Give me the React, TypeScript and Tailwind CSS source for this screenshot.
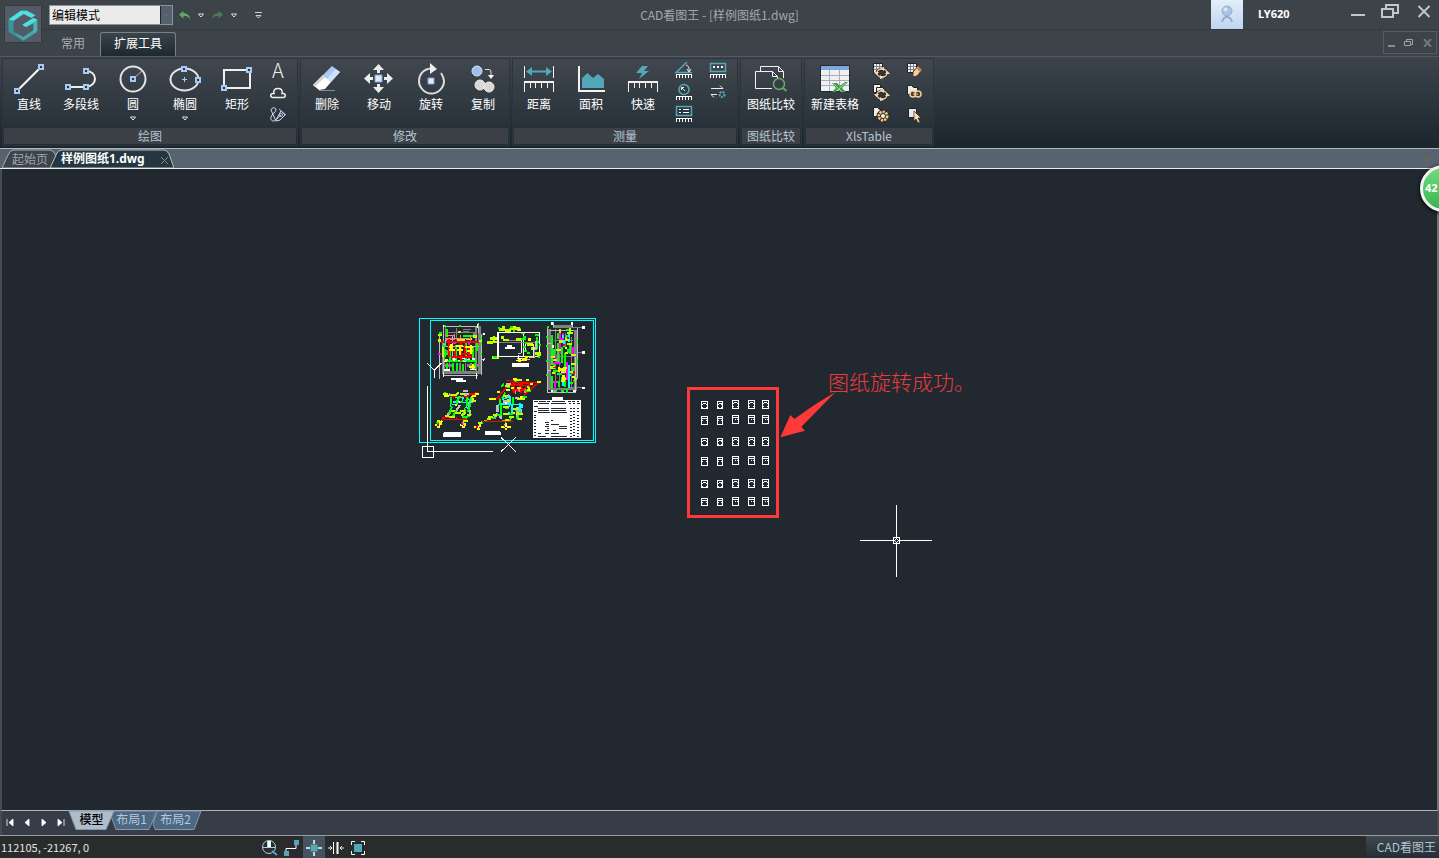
import { useState } from "react";
import type { ReactNode } from "react";

type IconProps = { children: ReactNode };

const TEAL = "#52a8b8";

function Icon({ children }: IconProps) {
  return (
    <svg width="32" height="32" viewBox="0 0 32 32" fill="none" className="overflow-visible">
      {children}
    </svg>
  );
}

function SmallIcon({ children }: IconProps) {
  return (
    <svg width="18" height="18" viewBox="0 0 18 18" fill="none" className="overflow-visible">
      {children}
    </svg>
  );
}

// Little blue grip with a dark middle
function Grip({ x, y }: { x: number; y: number }) {
  return (
    <g shapeRendering="crispEdges">
      <rect x={x - 3} y={y - 3} width="6" height="6" fill="#a9c9f5" />
      <rect x={x - 1} y={y - 1} width="2" height="2" fill="#1d3350" />
    </g>
  );
}

function Ruler() {
  return (
    <g stroke="#f2f2f2" shapeRendering="crispEdges">
      <path d="M1 18h30" strokeWidth="2" />
      <path d="M1.5 18v10M30.5 18v10M7.5 18v6M12.5 18v6M18.5 18v6M24.5 18v6" />
    </g>
  );
}

function SmallRuler() {
  return (
    <path
      d="M1 13.500h16M1.500 13v4M4.500 13v4M7.500 13v4M10.500 13v4M13.500 13v4M16.500 13v4"
      stroke="#fff"
      shapeRendering="crispEdges"
    />
  );
}

function Chevron() {
  return (
    <svg width="6" height="5" viewBox="0 0 6 5" fill="none">
      <path d="M0.500 1h5L3 4z" fill="#222" stroke="#e8e8e8" />
    </svg>
  );
}

const draw = [
  {
    label: "直线",
    icon: (
      <Icon>
        <path d="M4 27L28 3" stroke="#fff" strokeWidth="2" />
        <Grip x={28} y={3} />
        <Grip x={4} y={27} />
      </Icon>
    ),
  },
  {
    label: "多段线",
    icon: (
      <Icon>
        <path d="M3 23h18c12-1 12-16 0-16" stroke="#eee" strokeWidth="2" />
        <Grip x={21} y={7} />
        <Grip x={3} y={23} />
        <Grip x={21} y={23} />
      </Icon>
    ),
  },
  {
    label: "圆",
    menu: true,
    icon: (
      <Icon>
        <circle cx="16" cy="15" r="12.500" stroke="#e4e4e4" strokeWidth="2" />
        <path d="M17 14l8-7" stroke="#b4b8bd" />
        <Grip x={16} y={15} />
      </Icon>
    ),
  },
  {
    label: "椭圆",
    menu: true,
    icon: (
      <Icon>
        <ellipse cx="15.500" cy="15.500" rx="14" ry="11" stroke="#e4e4e4" strokeWidth="2" />
        <path d="M13 15.500h5M15.500 13v5" stroke="#a9c9f5" shapeRendering="crispEdges" />
        <Grip x={15} y={5} />
        <Grip x={29} y={16} />
      </Icon>
    ),
  },
  {
    label: "矩形",
    icon: (
      <Icon>
        <path d="M3 6h26v18H3z" stroke="#f0f0f0" strokeWidth="2" />
        <Grip x={28} y={6} />
        <Grip x={3} y={24} />
      </Icon>
    ),
  },
];

const modify = [
  {
    label: "删除",
    icon: (
      <Icon>
        <path d="M8 26.500h16" stroke="#888b90" />
        <path d="M21 2l8 6-9 10-8-7z" fill="#a9c9f5" />
        <path d="M24.500 5L29 8l-9 10-4-3z" fill="#cfe1fa" />
        <path d="M12 11l8 7-6 7-6 1-6-5z" fill="#fff" />
        <path d="M12 11l2 2L4 23l-2-2z" fill="#d4d4d6" />
      </Icon>
    ),
  },
  {
    label: "移动",
    icon: (
      <Icon>
        <g fill="#ececec">
          <path d="M15.500 0l5.500 6h-4v3h-3V6h-4zM15.500 29l5.500-6h-4v-3h-3v3h-4z" />
          <path d="M1 14.500L7 9v4h3v3H7v4zM30 14.500L24 9v4h-3v3h3v4z" />
        </g>
        <path d="M12 11h7v7h-7z" fill="#dfe9f8" stroke="#7fa3d6" />
      </Icon>
    ),
  },
  {
    label: "旋转",
    icon: (
      <Icon>
        <path d="M16 4.500C8 5 4 11 4 17c0 7 6 12.500 12.500 12.500S29 24 29 17c0-3-1-5-3-8" stroke="#dcdcdc" strokeWidth="2" />
        <path d="M15-1l7 6-7 5z" fill="#eee" />
        <path d="M13 14h6v6h-6z" fill="#dfe9f8" stroke="#7fa3d6" />
      </Icon>
    ),
  },
  {
    label: "复制",
    icon: (
      <Icon>
        <circle cx="10" cy="7" r="5" fill="#9fc0ee" stroke="#d3e2f7" />
        <circle cx="13" cy="21" r="5" fill="#d8d8d8" stroke="#eee" />
        <circle cx="22" cy="23" r="5" fill="#d8d8d8" stroke="#eee" />
        <path d="M18 5.500h4q2 0 2 2.500v4" stroke="#ddd" />
        <path d="M21 11h6l-3 4z" fill="#fff" />
      </Icon>
    ),
  },
];

const measure = [
  {
    label: "距离",
    icon: (
      <Icon>
        <path d="M1.500 2v12M30.500 2v12" stroke="#f2f2f2" shapeRendering="crispEdges" />
        <path d="M6 7.500h20" stroke={TEAL} strokeWidth="2" />
        <path d="M3 7.500L9 3v9zM29 7.500L23 3v9z" fill={TEAL} />
        <Ruler />
      </Icon>
    ),
  },
  {
    label: "面积",
    icon: (
      <Icon>
        <path d="M3.500 2v25M3 26.500h27" stroke="#f2f2f2" strokeWidth="2" shapeRendering="crispEdges" />
        <path d="M7 24V14l5.500-5 5.500 5 5-4 6 5v9z" fill={TEAL} />
      </Icon>
    ),
  },
  {
    label: "快速",
    icon: (
      <Icon>
        <path d="M15 2h6l-4 5h5L12 15l3-6h-6z" fill={TEAL} />
        <Ruler />
      </Icon>
    ),
  },
];

const compare = [
  {
    label: "图纸比较",
    icon: (
      <Icon>
        <path d="M5.500 7V2.500h18l5 5V14M23.500 2.500v5h5" stroke="#f2f2f2" />
        <path d="M17 24.500H.500v-17h17l5 5V14M17.500 7.500v5h5" stroke="#f2f2f2" />
        <circle cx="24" cy="20" r="5.500" stroke="#67a866" strokeWidth="1.500" />
        <path d="M28 24l3.500 3" stroke="#67a866" strokeWidth="2" />
      </Icon>
    ),
  },
];

const xls = [
  {
    label: "新建表格",
    icon: (
      <Icon>
        <path d="M1.500 1.500h29v26h-29z" fill="#eef0f3" stroke="#26292d" />
        <path d="M2 2h28v4H2z" fill="#7fa8df" />
        <path d="M2 11.500h28M2 16.500h28M2 21.500h28M10.500 6v21M20.500 6v21" stroke="#a9adb3" />
        <path d="M13 19h5l3 3 5-4h3l-6 6 4 4h-5l-3-2-3 2h-3l4-4z" fill="#3f9c43" />
        <path d="M14 19l9 9M27 19l-10 8" stroke="#a5d89f" />
      </Icon>
    ),
  },
];

const drawTools = [
  { name: "文字", icon: <span className="text-[20px] leading-[22px] font-light text-[#eee]">A</span> },
  {
    name: "云线",
    icon: (
      <SmallIcon>
        <path
          d="M4 14.500h10c3 0 3-4 0-4h-1C14 7 12 5.500 9 5.500S4 7 5 10.500H4c-3 0-3 4 0 4z"
          stroke="#eee"
          strokeWidth="1.500"
        />
      </SmallIcon>
    ),
  },
  {
    name: "样条",
    icon: (
      <SmallIcon>
        <path d="M2 5c1-3 5-3 5 0 0 2-4 4-5 7-1 4 3 5 5 3l5-9 4 4-5 5-4 1z" stroke="#e0e0e0" />
        <path d="M10 4l7 6M8 14l4-4" stroke="#9fc0ee" />
        <circle cx="12" cy="10" r="1.500" stroke="#9fc0ee" />
      </SmallIcon>
    ),
  },
];

const measureTools = [
  {
    name: "角度",
    icon: (
      <SmallIcon>
        <path d="M12 1L1 11.500h16" stroke={TEAL} strokeWidth="1.500" />
        <path d="M11 4c3 1 3 3 3 6M12 8l2 3 2-3" stroke="#eee" />
        <SmallRuler />
      </SmallIcon>
    ),
  },
  {
    name: "半径",
    icon: (
      <SmallIcon>
        <circle cx="9" cy="6.500" r="5" stroke={TEAL} strokeWidth="1.500" />
        <path d="M10 8L6.500 4.500M6.500 7V4.500H9" stroke="#eee" />
        <SmallRuler />
      </SmallIcon>
    ),
  },
  {
    name: "列表",
    icon: (
      <SmallIcon>
        <path d="M1.500 1.500h15v9h-15z" stroke={TEAL} strokeWidth="1.500" />
        <path d="M4 4.500h2M8 4.500h6M4 7.500h2M8 7.500h6" stroke="#fff" shapeRendering="crispEdges" />
        <SmallRuler />
      </SmallIcon>
    ),
  },
];

const measureTools2 = [
  {
    name: "坐标",
    icon: (
      <SmallIcon>
        <path d="M1.500 2.500h15v8h-15z" stroke={TEAL} strokeWidth="1.500" />
        <path d="M4 6h2M8 6h2M12 6h2" stroke="#fff" strokeWidth="2" shapeRendering="crispEdges" />
        <SmallRuler />
      </SmallIcon>
    ),
  },
  {
    name: "设置",
    icon: (
      <SmallIcon>
        <path d="M2 5.500h12l-3-3M8 11.500H2l3 3" stroke="#eee" />
        <circle cx="13" cy="11.500" r="2.500" stroke={TEAL} strokeWidth="2" strokeDasharray="2 1" />
      </SmallIcon>
    ),
  },
];

function Grid() {
  return (
    <>
      <path d="M2.500 2.500h9v9h-9z" fill="#eceff3" stroke="#222" />
      <path d="M5.500 3v8M8.500 3v8M3 5.500h8M3 8.500h8" stroke="#7d838a" />
    </>
  );
}

function Orbit() {
  return (
    <>
      <ellipse cx="11" cy="12" rx="5" ry="4" fill="#30363c" stroke="#26221c" strokeWidth="3" />
      <ellipse cx="11" cy="12" rx="5" ry="4" stroke="#f3cf9c" strokeWidth="1.500" />
      <path d="M9 7l4-1v4zM13 17l-4 1v-4zM3 11h5l-2.500 3zM19 13h-5l2.500-3z" fill="#f7dcb4" />
    </>
  );
}

const xlsTools = [
  { name: "更新表格", icon: <SmallIcon><Grid /><Orbit /></SmallIcon> },
  {
    name: "更新全部",
    icon: (
      <SmallIcon>
        <path d="M2.500 1.500h7v8h-7z" fill="#eee" stroke="#222" />
        <path d="M5.500 4.500h7v8h-7z" fill="#eee" stroke="#222" />
        <Orbit />
      </SmallIcon>
    ),
  },
  {
    name: "表格设置",
    icon: (
      <SmallIcon>
        <path d="M2.500 2.500h4l2 2h4v7h-10z" fill="#eee" stroke="#222" />
        <circle cx="12" cy="11" r="4" stroke="#3a2c18" strokeWidth="5" />
        <circle cx="12" cy="11" r="4" stroke="#f3cf9c" strokeWidth="3" strokeDasharray="2 1" />
        <circle cx="12" cy="11" r="2.500" fill="#f2f2f2" stroke="#3a2c18" />
      </SmallIcon>
    ),
  },
];

const xlsTools2 = [
  {
    name: "编辑表格",
    icon: (
      <SmallIcon>
        <Grid />
        <path d="M8 11l5-6 4 4-5 6-4 1z" fill="#f3cf9c" stroke="#4a3526" />
        <path d="M13 5l4 4-2 2-4-4z" fill="#cf7f52" />
      </SmallIcon>
    ),
  },
  {
    name: "链接",
    icon: (
      <SmallIcon>
        <path d="M2.500 2.500h4l2 2h4v7h-10z" fill="#eee" stroke="#222" />
        <circle cx="8" cy="11" r="3" fill="#4a3b2a" stroke="#f3cf9c" strokeWidth="1.500" />
        <circle cx="13" cy="11" r="3" fill="#4a3b2a" stroke="#f3cf9c" strokeWidth="1.500" />
        <path d="M8 11h5" stroke="#f3cf9c" />
      </SmallIcon>
    ),
  },
  {
    name: "选择",
    icon: (
      <SmallIcon>
        <path d="M3.500 3.500h8v9h-8z" fill="#e8e8ea" stroke="#222" />
        <path d="M9 6l7 7h-3l2 4-2 1-2-4-2 2z" fill="#f7dcb4" stroke="#3a2c18" strokeWidth=".700" />
      </SmallIcon>
    ),
  },
];

type Tool = { label: string; icon: ReactNode; menu?: boolean };
type MiniTool = { name: string; icon: ReactNode };

function ToolButton({ label, icon, menu }: Tool) {
  return (
    <button
      className={`flex flex-col items-center pt-[5px] text-xs leading-4 text-white ${
        label.length > 3 ? "px-1.5" : "w-[52px]"
      }`}
    >
      {icon}
      <span>{label}</span>
      {menu && <span className="mt-1"><Chevron /></span>}
    </button>
  );
}

function ToolColumn({ tools }: { tools: MiniTool[] }) {
  return (
    <div className="flex w-[30px] flex-col">
      {tools.map((t) => (
        <button key={t.name} aria-label={t.name} className="flex h-[22px] items-center justify-center">
          {t.icon}
        </button>
      ))}
    </div>
  );
}

function Group({ title, tools, children }: { title: string; tools: Tool[]; children?: ReactNode }) {
  return (
    <section className="flex flex-col bg-linear-to-b from-[#41474e] to-[#212c34] pb-px shadow-[0_0_0_1px_#2c353d]">
      <div className="flex h-[69px]">
        {tools.map((t) => (
          <ToolButton key={t.label} {...t} />
        ))}
        {children}
      </div>
      <h2 className="mx-px bg-[#3b4047] text-center text-xs leading-4 text-[#b4c6d4]">{title}</h2>
    </section>
  );
}

function Logo() {
  return (
    <button aria-label="菜单" className="absolute top-[5px] left-1 border border-[#333a43] bg-[#525b66] p-px">
      <svg width="34" height="34" viewBox="0 0 102 102">
        <path d="M8 38L44 11h18l26 14-12 8-22-11-32 21v36l-14-8z" fill="#43a9ad" />
        <path d="M44 11h18l26 14-12 7-24-12-30 21-14-4z" fill="#50e0e0" />
        <path d="M8 38l14 5v32l29 16v10L9 76z" fill="#3a9499" />
        <path d="M24 75l28 15 34-23 7 8-41 26z" fill="#43a7ab" />
        <path d="M49 53l33-20 12 5v34l-12 6V50L60 61z" fill="#45b4b8" />
        <path d="M49 53l33-20 12 5-34 22z" fill="#55dddd" />
      </svg>
    </button>
  );
}

function Undo() {
  return (
    <svg width="11" height="9" viewBox="0 0 10 8" fill="currentColor">
      <path d="M0 3l4-3v2c4 0 6 2 6 6-1-3-3-3.500-6-3.500V7z" />
    </svg>
  );
}

function Header({ mode, setMode }: { mode: string; setMode: (m: string) => void }) {
  return (
    <header className="relative bg-[#3c4349]">
      <Logo />
      <div className="flex h-[29px] items-start">
        <div className="flex-1">
          <div className="flex items-center pt-[5px] pl-[49px]">
            <div className="relative flex h-5 w-[124px] border border-[#8d9298] bg-[#ebebeb]">
              <select
                aria-label="模式"
                value={mode}
                onChange={(e) => setMode(e.target.value)}
                className="w-full appearance-none bg-transparent pl-0.5 text-xs text-black outline-none"
              >
                <option>编辑模式</option>
                <option>看图模式</option>
              </select>
              <span className="pointer-events-none absolute inset-y-0 right-0 flex w-3 items-center justify-center border-l border-[#222] bg-[#546070]">
                <svg width="5" height="3" viewBox="0 0 5 3"><path d="M0 0h5L2.500 3z" fill="#6c6a68" /></svg>
              </span>
            </div>
            <button aria-label="撤销" className="ml-1.5 text-[#5fae5b]"><Undo /></button>
            <button aria-label="撤销列表" className="ml-2"><Chevron /></button>
            <button aria-label="重做" className="ml-2 -scale-x-100 text-[#4b7a55]"><Undo /></button>
            <button aria-label="重做列表" className="ml-2"><Chevron /></button>
            <button aria-label="自定义" className="ml-[18px]">
              <svg width="7" height="7" viewBox="0 0 7 7" fill="none">
                <path d="M0 .500h7M1 3.500h5L3.500 6z" stroke="#cfcfcf" />
              </svg>
            </button>
          </div>
        </div>
        <h1 className="pt-[7px] text-xs leading-4 text-[#a3a8ad]">CAD看图王 - [样例图纸1.dwg]</h1>
        <div className="flex flex-1 items-center justify-end">
          <button aria-label="用户" className="bg-linear-to-b from-[#e3eefa] to-[#bfd5ef]">
            <svg width="32" height="29" viewBox="0 0 32 29" fill="none">
              <circle cx="16" cy="11" r="5" fill="#a9c4e0" stroke="#8fb0d2" />
              <path d="M11 22c1-4 3-5 5-5s4 1 5 5" stroke="#8fb0d2" strokeWidth="2" />
              <circle cx="14.500" cy="9.500" r="2" fill="#d8e6f4" />
            </svg>
          </button>
          <a href="#user" className="mr-[60px] ml-[15px] w-8 font-['Noto_Sans'] text-[11px] font-bold text-white">LY620</a>
          <button aria-label="最小化" className="mr-[15px]">
            <svg width="16" height="18" viewBox="0 0 16 18"><path d="M1 8h14v2H1z" fill="#c3c5c7" /></svg>
          </button>
          <button aria-label="还原" className="mr-[18px]">
            <svg
              width="18"
              height="18"
              viewBox="0 0 18 18"
              fill="none"
              stroke="#c3c5c7"
              strokeWidth="2"
              className="overflow-visible"
            >
              <path d="M1 3h11v8H1zM5 3V-1h12v8h-5" />
            </svg>
          </button>
          <button aria-label="关闭" className="mr-2">
            <svg
              width="14"
              height="18"
              viewBox="0 0 14 18"
              fill="none"
              stroke="#c3c5c7"
              strokeWidth="2"
              className="overflow-visible"
            >
              <path d="M1.500 0l11 11M12.500 0l-11 11" />
            </svg>
          </button>
        </div>
      </div>
      <nav className="flex h-[27px] items-end border-t border-[#343a40] pl-[49px]">
        <button className="px-3 pb-[5px] text-xs leading-4 text-[#a9adb2]">常用</button>
        <button className="ml-[3px] rounded-t-[3px] border border-b-0 border-[#7b8087] bg-linear-to-b from-[#3a444b] to-[#1d2830] px-[13px] pt-0.5 pb-[5px] text-xs leading-4 text-white">
          扩展工具
        </button>
        <div className="mr-0.5 mb-0.5 ml-auto flex h-[23px] w-[54px] items-center justify-around border border-[#525c6a]">
          <button aria-label="最小化图纸">
            <svg width="8" height="10" viewBox="0 0 8 10"><path d="M0 7h7v2H0z" fill="#8a8d90" /></svg>
          </button>
          <button aria-label="还原图纸">
            <svg width="10" height="8" viewBox="0 0 10 8" fill="none" stroke="#a0a3ab">
              <path d="M.500 2.500h6v4h-6zM2.500 2V.500h6v5H7" />
            </svg>
          </button>
          <button aria-label="关闭图纸">
            <svg width="9" height="8" viewBox="0 0 9 8" stroke="#74777a" strokeWidth="2"><path d="M1 0l7 8M8 0L1 8" /></svg>
          </button>
        </div>
      </nav>
    </header>
  );
}

function Ribbon() {
  return (
    <div className="flex items-start gap-1 border-t border-[#525960] bg-linear-to-b from-[#3d444c] to-[#1b252c] pt-0.5 pb-[3px] pl-[3px]">
      <Group title="绘图" tools={draw}>
        <div className="mr-1"><ToolColumn tools={drawTools} /></div>
      </Group>
      <Group title="修改" tools={modify} />
      <Group title="测量" tools={measure}>
        <div className="mr-1 flex gap-1">
          <ToolColumn tools={measureTools} />
          <ToolColumn tools={measureTools2} />
        </div>
      </Group>
      <Group title="图纸比较" tools={compare} />
      <Group title="XlsTable" tools={xls}>
        <div className="mr-1 flex gap-1">
          <ToolColumn tools={xlsTools} />
          <ToolColumn tools={xlsTools2} />
        </div>
      </Group>
    </div>
  );
}

function DocTabs() {
  return (
    <div className="flex h-[21px] items-stretch border-t border-b border-t-[#b5b8bb] border-b-[#eceded] bg-[#586370] pl-0.5 text-xs">
      <button className="relative w-[54px] text-left text-[#9ca4ad]">
        <svg className="absolute inset-0" width="60" height="19" viewBox="0 0 60 19">
          <path d="M0 19L7 4q2-3 5-3h36q3 0 5 4l7 14z" fill="#3c444b" stroke="#a9adb1" />
        </svg>
        <span className="relative pl-2.5">起始页</span>
      </button>
      <button className="relative -ml-1.5 w-[124px] text-left text-white">
        <svg className="absolute inset-0" width="124" height="19" viewBox="0 0 124 19">
          <path d="M0 19L7 4q2-3 5-3h102q3 0 5 4l5 14z" fill="#243740" stroke="#b9bdc0" />
          <path d="M111 8l7 7M118 8l-7 7" stroke="#8b8580" />
        </svg>
        <span className="relative pl-[11px] font-['Noto_Sans','Noto_Sans_CJK_SC',sans-serif] text-xs font-bold">样例图纸1.dwg</span>
      </button>
      <span className="mt-2 mr-2 ml-auto">
        <svg width="9" height="5" viewBox="0 0 9 5"><path d="M0 0h9L4.500 5z" fill="#6a625d" /></svg>
      </span>
    </div>
  );
}

type Stroke = { c: string; w?: number; d: string };

// Plans, axonometric views and the legend table of the sheet
const sheet: Stroke[] = [
  // floor plan
  { c: "#808080", w: 9, d: "M99 95v96M208 48v145M98 125h22M95 187h112M95 165h34M170 165h38M190 70h12" },
  { c: "#808080", w: 4, d: "M160 58h22M160 66h18M106 52v40M140 55v35M198 52v130M110 68h90M205 74h16M205 149h16M118 155v30M150 158v28M166 158v28M183 158v20" },
  { c: "#c0c0c0", d: "M100 48h105M100 196h105M100 48v150M213 75v120M205 40v30M89 66v140M215 149h8v-6M222 70v6M96 110h110M126 74v80" },
  { c: "#00ff00", w: 6, d: "M100 48h8M148 48h6M200 48h6M213 80v8M213 100v6M213 128v8M88 68h8M112 58v24M99 108h10M106 118v24M102 152h98M120 110v40M139 105v50M152 110v40M168 100v55M188 110v40M130 158v24M110 160v20M196 158v22M140 160v24M160 162v20M158 78h34M200 98v26M103 132h12M178 124v30" },
  { c: "#bfff00", w: 8, d: "M83 75h12M84 91h10M140 91h24M168 87h18M190 80h12M99 112v28M148 62v8M206 93h10" },
  { c: "#ff7f7f", d: "M104 75h28v12h-22v12M134 72v14M104 84h70M182 75v20M130 86h50M150 76v14" },
  { c: "#ff0000", w: 6, d: "M93 97h115M118 88v14M118 102v40M124 140h62M154 100v52M166 105v30M176 110v34M136 116v24M150 132h34M182 118v18" },
  { c: "#ffff00", w: 7, d: "M116 110h14M116 120h18M138 108h20M142 120h16M166 110h22M172 122h16M124 102v22M150 104v30M182 104v28M104 149h10M176 170h18M188 163v15M160 152h8" },
  { c: "#ff00ff", w: 6, d: "M84 132h10M130 100h8M178 97v8" },
  { c: "#00ffff", w: 4, d: "M106 91v14M162 150h8M98 104h6" },
  { c: "#fff", w: 4, d: "M101 44v8M203 42v12M100 190v12M200 190v16M102 180h18M110 176v8M180 178h18M132 144v10M222 70v6M220 146v6M103 154h8" },
  { c: "#fff", w: 4, d: "M130 148h8M144 151h6M156 146h10M172 149h8M186 147h8" },
  { c: "#fff", w: 5, d: "M124 207h35M139 213h29" },
  // roof plan
  { c: "#fff", w: 4, d: "M264 68h125v72H264zM340 72v66M324 139h20M320 146h32M318 152h30M335 88v42M346 96v30M326 136v18" },
  { c: "#808080", d: "M265 96h122M280 92h40M372 112v30M298 56h36" },
  { c: "#bfff00", w: 8, d: "M266 59h20M276 51h10M300 56h30M286 62h18M236 96h26M231 97h18M240 86h24M252 78v18M318 88h14M350 103h18M364 115h18M374 130h18M246 143h20M272 82h10M280 90h18M380 135h14" },
  { c: "#00ff00", w: 6, d: "M268 50v8M300 50h16M334 70h12M376 76h12M340 82h8M332 86h16M344 98h8M338 112h10M342 122h8M352 128h8M376 96h10M386 106h8M250 142h10M383 140h6M308 62h8M380 80v38" },
  { c: "#ffff00", w: 7, d: "M310 51h8M320 60h12M256 87h8M354 88h8M364 104h8M346 140h8M324 151h10M336 148h14M356 140h12" },
  { c: "#c0c0c0", w: 5, d: "M324 130h10M360 142h14M350 148h10M378 92v28" },
  { c: "#bfffff", w: 4, d: "M370 108v30" },
  { c: "#fff", w: 4, d: "M264 68h125M264 68v72h54M389 68v14" },
  { c: "#fff", w: 7, d: "M285 113h31M291 107h16" },
  { c: "#fff", w: 12, d: "M306 165h51" },
  // elevation
  { c: "#808080", w: 7, d: "M418 56v184M496 60v182M430 49h56M412 128h22M416 237h78M424 216h26" },
  { c: "#808080", d: "M450 52h70M480 128h40M474 233h44M448 66v170M466 70v40M484 80v156M436 56v180M492 205h12M432 90h56M440 140h48" },
  { c: "#c0c0c0", d: "M412 50v196M502 54v150M430 37v14M486 38v14M497 140v108M410 246h88M420 62h72M412 100h10M412 180h12" },
  { c: "#00ff00", w: 6, d: "M412 50h6M411 78v6M412 104v8M412 150v6M411 192v6M426 74v90M431 116v24M444 68v20M443 100v56M455 110v50M468 60h8M470 76v16M480 98v34M464 130v50M430 182h20M426 198v36M488 172v20M492 210v10M446 214v16M466 202v30M440 192h16M455 200v16M485 130h8M424 242h16M452 244h10M472 238v10M502 90v8M502 150v8M474 116v14M432 162v16M480 220h10" },
  { c: "#ff00ff", w: 6, d: "M451 68v64M451 86h12M437 132v28M430 158h22M472 156v54M436 214v22M490 112v28M456 72h6M452 190h12" },
  { c: "#00ffff", w: 6, d: "M476 66v30M462 90v22M476 165v68M466 84h10M474 196h8M460 208v20M458 74v10" },
  { c: "#bfff00", w: 7, d: "M450 58v12M480 55v10M470 69h18M466 88h12M470 101h16M446 94h12M438 120h14M424 140h10M464 128h10M484 134h14M428 150h12M482 162h16M420 172h14M446 176h18M452 184h16M426 188h8M454 212h8M492 206h8M480 186h10" },
  { c: "#ffff00", w: 7, d: "M446 172v14M458 174h14M460 196v20M460 206h8M486 200h8M448 180h20M466 114h6" },
  { c: "#ff0000", w: 5, d: "M458 104h6M492 182v10M470 84h6M430 172h8M490 212v8" },
  { c: "#fff", w: 8, d: "M515 53h9M515 128h9M515 234h9" },
  { c: "#fff", w: 5, d: "M426 37v8M486 37v8M428 104v10M423 242h6M490 243h8" },
  // left axonometric
  { c: "#c0c0c0", w: 7, d: "M160 243h14M116 252l12 8M168 256l14-6M174 298l8-18M176 284l10-18M124 298l-12 20M150 285l-16 24M166 250v12M158 336v10M84 344l12-8M180 300v14" },
  { c: "#ff0000", w: 4, d: "M120 260h52M178 252h28M95 328h76M102 251l16 3M96 324l20-2M140 328v-6M155 322l16 6M205 248h-10" },
  { c: "#00ffff", w: 4, d: "M134 262h26l-4 14h-28M122 264v26M170 262v30M130 278h60M126 284h8M165 272l12-6M166 292h12M150 262l-14 24" },
  { c: "#00ff00", w: 6, d: "M106 246v8M122 262v20M150 258l-10 16M170 262v26M190 256l-12 16M126 290l-8 22M138 300l-8 18M166 296l-8 28M182 278l-8 28M184 312l-16 12M160 322h12M148 276h10M80 340l10-6M140 274v10" },
  { c: "#bfff00", w: 6, d: "M100 251h14M122 254h18M150 252h14M184 262l10-6M186 273h12M124 306l10-6M118 321h18M136 310h18M150 303h14M104 318h14M154 316l14-8M172 315h12M146 246l-8 8M80 334h10M158 332h16" },
  { c: "#ffff00", w: 7, d: "M102 257h16M188 257h10M185 266h8M196 251h10M74 345h8M82 351h9M90 340h6M150 344h6M156 350h9M96 332l-8 12M161 343h8M134 284h8" },
  { c: "#ff0000", w: 5, d: "M86 340l-4 6M158 338l-4 8M170 258h6M96 328h74" },
  { c: "#fff", w: 11, d: "M102 371h51M99 375h54" },
  // right axonometric
  { c: "#ff0000", w: 4, d: "M302 217h85M387 217l-56 48M302 217l-42 50M288 212h26M218 334h92M305 240h45M320 226h46M312 228v20M333 222v26M346 228v20M300 226l54-6M312 213v14M326 214v10M338 212v10M262 266h10M356 216v10" },
  { c: "#ff7f7f", w: 5, d: "M316 240v12M326 232v14M344 238v10" },
  { c: "#c0c0c0", w: 7, d: "M288 222h14M297 254l-12 12M262 306v-20M272 300v26M322 290v30M280 274h22M266 320h10M316 264h12M208 344l8-8M284 346l6-8M332 296v16M252 324l12-14" },
  { c: "#00ffff", w: 4, d: "M276 268l26-8v20h-30M266 284h70M266 296v-14M306 284v26M330 280v26M298 264v26M274 280v20M336 282v12M294 306l12 8" },
  { c: "#00ff00", w: 6, d: "M318 206v10M282 220l-8 12M290 232h10M344 242h18M286 248l-10 18M308 262v20M328 266h12M274 284v30M286 294h10M296 312h12M316 300h8M330 306l-10 22M308 318l-10 14M258 316h14M246 325h12M222 333h10M212 340h8M276 334h8M270 268v16M340 262h12" },
  { c: "#bfff00", w: 6, d: "M312 211h24M284 229h16M320 234h14M352 228l8 8M280 258h12M320 268h24M280 290h16M308 296h16M318 313h20M298 321h14M280 312h16M234 322h16M230 328h12M250 316h12M204 340h12M324 328h12M284 330h14M292 268l8 8" },
  { c: "#ffff00", w: 7, d: "M308 206h12M348 210h10M382 216h10M288 240h12M302 234h10M262 246h8M350 240h10M238 267h20M330 262h10M308 308h8M193 351h10M200 356h9M206 346h8M274 350h10M284 356h8M290 350h12M284 342h6M360 222h8" },
  { c: "#ff0000", w: 5, d: "M204 346l-4 8M286 344l-2 8M336 236h10M320 244h8M220 334h88" },
  { c: "#fff", w: 9, d: "M226 366h43M226 369h46" },
  { c: "#fff", w: 4, d: "M88 344v8M158 344v6M206 348v6M288 346v6M148 272v6M288 276v6" },
];

const legendGaps = [
  "M371 275h12M386 275h22M412 275h8M425 275h40M474 275h8M487 275h8M500 275h8",
  "M384 281h34M424 281h44M476 281h6M490 281h6M502 281h8",
  "M371 290h12M384 294h32M424 294h44M480 294h6M490 294h6M500 294h8",
  "M371 303h10M384 301h32M424 301h44M480 303h6M490 303h6M502 303h6",
  "M384 308h36M422 308h48M371 315h8M371 323h8M371 332h8M371 341h8M371 350h8M371 359h8M371 368h8M371 377h8",
  "M404 338h14M408 344h10M404 350h12M410 356h8M406 362h12M406 371h10M384 371h10M384 380h24",
  "M424 332h4M424 344h22M446 350h24M446 356h26M424 371h22M424 380h48M428 362h10",
  "M480 316h5M480 325h5M480 334h5M480 343h5M480 352h5M480 361h5M480 370h5M480 379h5",
  "M490 312h4M490 321h4M490 330h4M490 339h4M490 348h4M490 357h4M490 366h4M490 375h4",
  "M502 316h6M502 325h6M502 334h6M502 343h6M502 352h6M502 361h6M502 370h6M502 379h6",
];

function Sheet() {
  return (
    <svg
      className="absolute top-[141px] left-[410px]"
      width="195"
      height="155"
      viewBox="0 0 585 465"
      fill="none"
      shapeRendering="crispEdges"
    >
      <path d="M27 24h531v375H27zM30 27v369h525V27z" fill="#00ffff" fillRule="evenodd" />
      <path d="M60 30h492v363H60zM63 33v357h486V33z" fill="#00ffff" fillRule="evenodd" />
      {sheet.map((s, i) => (
        <path key={i} d={s.d} stroke={s.c} strokeWidth={s.w ?? 3} />
      ))}
      <path d="M369 269h144v115H369zM426 261h33v9h-33z" fill="#fff" />
      <path d={legendGaps.join("")} stroke="#212830" strokeWidth="3" />
      {/* UCS marker */}
      <path d="M52 229v196h197M37 409h34v33H37z" stroke="#fff" strokeWidth="3" />
      <path d="M51 159l22 22 22-22M73 181v23M273 382l44 43M317 382l-44 43" stroke="#fff" strokeWidth="3" />
    </svg>
  );
}

const cols = [63, 111, 156, 204, 246];
const rows = [
  { y: 108, h: 21 },
  { y: 153, h: 24 },
  { y: 219, h: 21 },
  { y: 276, h: 24 },
  { y: 345, h: 21 },
  { y: 399, h: 21 },
];

function Details() {
  return (
    <svg
      className="absolute top-[196px] left-[680px]"
      width="300"
      height="215"
      viewBox="0 0 900 645"
      fill="none"
      shapeRendering="crispEdges"
    >
      <path d="M25 70h267v384H25z" stroke="#ff3939" strokeWidth="9" />
      <path
        d="M301 217l30-67 12 12q62-46 124-82-50 52-103 105l11 12z"
        fill="#ff3939"
        shapeRendering="geometricPrecision"
      />
      {rows.map(({ y, h }, r) =>
        cols.map((x, c) => {
          const w = c === 1 ? 15 : 18;
          const top = c > 1 ? y - 3 : y;
          const height = c > 1 ? 24 : h;
          return (
            <g key={`${r}-${c}`} stroke="#fff" strokeWidth="3">
              <rect x={x + 1.5} y={top + 1.5} width={w} height={height} />
              {r % 2 === 0 ? (
                <path d={`M${x + 6} ${top + 7.5}h9M${x + 3} ${top + 10.5}h4M${x + w - 3} ${top + 10.5}h4M${x + 3} ${top + 19.5}h3M${x + w - 3} ${top + 19.5}h3`} />
              ) : (
                <path d={`M${x + 3} ${top + 7.5}h${w - 3}M${x + (c > 1 ? 9 : 3)} ${top + 13.5}h3M${x + w - 3} ${top + 13.5}h3`} />
              )}
            </g>
          );
        })
      )}
      {/* crosshair */}
      <path d="M540 526h99M660 526h96M649 420v96M649 537v99" stroke="#fff" strokeWidth="3" />
      <path d="M640.500 517.500h18v18h-18z" stroke="#fff" strokeWidth="3" />
      <path
        d="M645 522h3v3h-3zM651 522h3v3h-3zM645 528h3v3h-3zM651 528h3v3h-3zM648 519h3v3h-3zM648 531h3v3h-3zM642 525h3v3h-3zM654 525h3v3h-3z"
        fill="#fff"
      />
    </svg>
  );
}

function Canvas() {
  return (
    <main className="relative flex-1 border-x-2 border-l-[#454c52] border-r-[#6d7276] bg-[#212830]">
      <div className="absolute inset-y-0 -left-0.5">
        <Sheet />
        <Details />
        <p className="absolute top-[200px] left-[828px] text-[21px] leading-6 font-light whitespace-nowrap text-[#f03a3c]">
          图纸旋转成功。
        </p>
      </div>
      <button className="absolute -top-1 -right-[30px] size-[47px] rounded-full border-3 border-[#f2f2f2] bg-linear-to-b from-[#6fdc7c] to-[#35b552] pl-0.5 text-left font-['Noto_Sans'] text-[11px] font-bold text-white shadow-[0_1px_4px_#000]">
        42
      </button>
    </main>
  );
}

const navIcons = [
  { name: "第一页", d: "M1 1v7M7 1L3 4.500 7 8z" },
  { name: "上一页", d: "M6 1L2 4.500 6 8z" },
  { name: "下一页", d: "M3 1l4 3.500L3 8z" },
  { name: "最后一页", d: "M8 1v7M2 1l4 3.500L2 8z" },
];

const layoutTabs = [
  { name: "模型", shape: "M0 0l7 18.500h30L45 0z" },
  { name: "布局1", shape: "M4 0L2 5l5 13.500h33L48 0z" },
  { name: "布局2", shape: "M4 0L0 13l2 5.500h39L48 0z" },
];

function LayoutTabs({ active, setActive }: { active: string; setActive: (t: string) => void }) {
  return (
    <div className="flex h-[25px] items-start border-x-2 border-t border-x-[#454c52] border-t-[#a9b6c0] bg-[#363d48]">
      <div className="flex h-[22px] w-[67px] items-center">
        {navIcons.map((n) => (
          <button key={n.name} aria-label={n.name} className="flex flex-1 justify-center">
            <svg width="9" height="9" viewBox="0 0 9 9" fill="#fff" stroke="#fff" strokeWidth=".800"><path d={n.d} /></svg>
          </button>
        ))}
      </div>
      <div className="flex">
        {layoutTabs.map((t) => (
          <button
            key={t.name}
            onClick={() => setActive(t.name)}
            className={`relative h-[19px] w-[45px] pb-[3px] text-center text-xs leading-4 ${
              active === t.name ? "z-10 -mr-[5px] font-medium text-black" : "-mr-px text-[#b7c9dc]"
            }`}
          >
            <svg className="absolute inset-0 overflow-visible" width="45" height="19" viewBox="0 0 45 19">
              <path d={t.shape} fill={active === t.name ? "#aebccb" : "#4b6884"} stroke="#8b97a3" />
            </svg>
            <span className="relative">{t.name}</span>
          </button>
        ))}
      </div>
    </div>
  );
}

const statusIcons = [
  {
    name: "缩放",
    icon: (
      <>
        <circle cx="8" cy="8" r="6.500" stroke="#a9d5dc" />
        <path d="M2 8.500h12M6.500 2v6M9.500 2v6" stroke="#a9d5dc" />
        <path d="M7 2h3v6H7z" fill="#fff" />
        <path d="M11 12l5 4" stroke={TEAL} strokeWidth="2" />
      </>
    ),
  },
  {
    name: "正交",
    icon: (
      <>
        <path d="M3 14V9.500h10V4" stroke="#fff" />
        <path d="M1 12h5v5H1zM11 1h5v5h-5z" fill={TEAL} />
      </>
    ),
  },
  {
    name: "捕捉",
    on: true,
    icon: (
      <>
        <path d="M9 1v4M9 13v4M1 9h4M13 9h4" stroke="#fff" strokeWidth="1.500" />
        <path d="M5.500 5.500h7v7h-7z" fill={TEAL} />
      </>
    ),
  },
  {
    name: "线宽",
    icon: (
      <>
        <path d="M6.500 3v12" stroke="#fff" />
        <path d="M10.500 3v12" stroke="#fff" strokeWidth="2" />
        <path d="M1 9h4M3 7l2 2-2 2M17 9h-4M15 7l-2 2 2 2" stroke="#e8e8e8" />
      </>
    ),
  },
  {
    name: "全屏",
    icon: (
      <>
        <path d="M2.500 6V2.500H6M12 2.500h3.500V6M15.500 12v3.500H12M6 15.500H2.500V12" stroke="#fff" />
        <path d="M5 5h8v8H5z" fill={TEAL} />
      </>
    ),
  },
];

function StatusBar() {
  return (
    <footer className="flex h-[23px] items-stretch border-t border-[#9a9c9e] bg-[#2a2b2d] text-xs text-[#e4e4e4]">
      <output className="w-[259px] pl-px text-[11px] leading-[23px]">112105, -21267, 0</output>
      {statusIcons.map((s) => (
        <button
          key={s.name}
          aria-label={s.name}
          className={`flex w-[22px] items-center justify-center pt-px ${s.on ? "bg-[#435360]" : ""}`}
        >
          <svg width="18" height="18" viewBox="0 0 18 18" fill="none">{s.icon}</svg>
        </button>
      ))}
      <span className="ml-auto bg-linear-to-b from-[#404850] to-[#242e36] pr-[3px] pl-[11px] leading-[22px] text-[#b5c3cf]">
        CAD看图王
      </span>
    </footer>
  );
}

export default function App() {
  const [mode, setMode] = useState("编辑模式");
  const [layout, setLayout] = useState("模型");

  return (
    <div className="flex h-screen flex-col overflow-hidden bg-[#212830] font-['Noto_Sans_CJK_SC','Noto_Sans',sans-serif]">
      <Header mode={mode} setMode={setMode} />
      <Ribbon />
      <DocTabs />
      <Canvas />
      <LayoutTabs active={layout} setActive={setLayout} />
      <StatusBar />
    </div>
  );
}
